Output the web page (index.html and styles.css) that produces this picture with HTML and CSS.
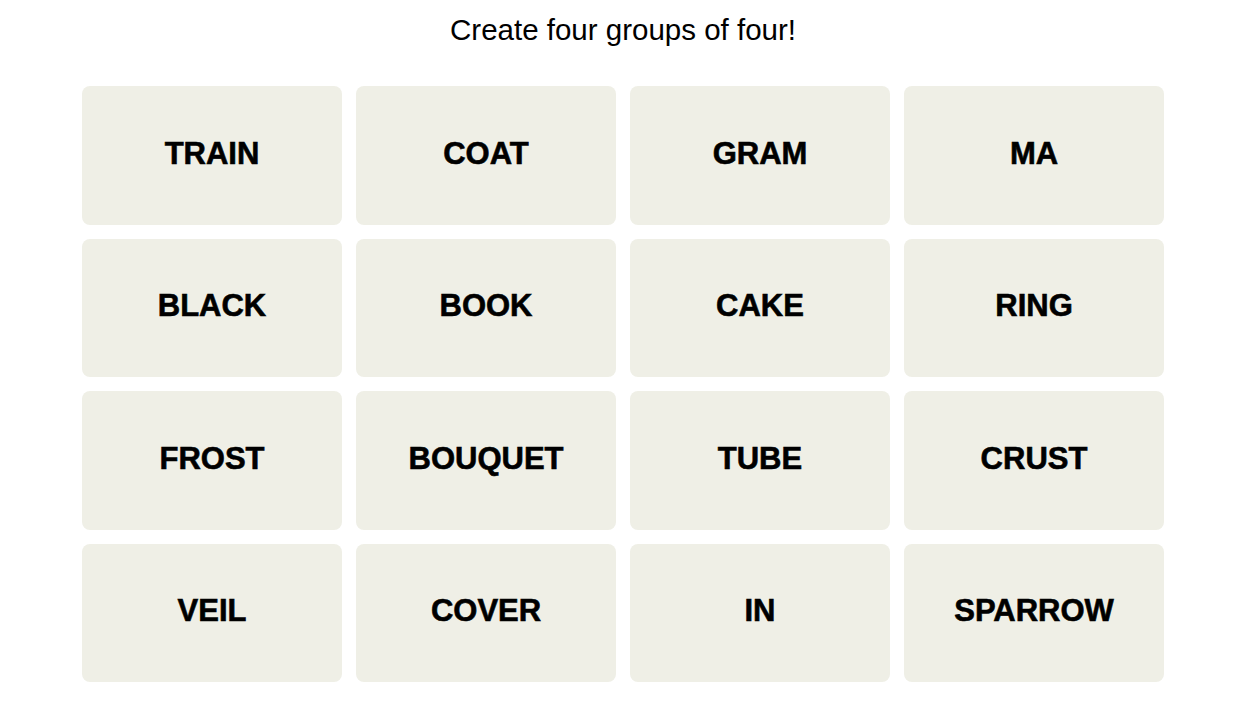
FILE: index.html
```html
<!DOCTYPE html>
<html>
<head>
  <title>Connections</title>
  <link rel="stylesheet" href="styles.css">
</head>
<body>
  <div class="game">
    <h2 class="prompt">Create four groups of four!</h2>
    <div class="board" id="board"></div>
  </div>
  <script>
    // Words in board order, left to right, top to bottom
    const words = [
      'TRAIN', 'COAT', 'GRAM', 'MA',
      'BLACK', 'BOOK', 'CAKE', 'RING',
      'FROST', 'BOUQUET', 'TUBE', 'CRUST',
      'VEIL', 'COVER', 'IN', 'SPARROW'
    ];

    const board = document.getElementById('board');
    words.forEach((word) => {
      const tile = document.createElement('button');
      tile.className = 'tile';
      tile.textContent = word;
      tile.addEventListener('click', () => {
        tile.classList.toggle('selected');
      });
      board.appendChild(tile);
    });
  </script>
</body>
</html>
```

FILE: styles.css
```css
body {
  font-family: "Liberation Sans", Arial, sans-serif;
  margin: 0;
  padding: 0;
  background-color: #fff;
  color: #000;
}
.game {
  width: 1082px;
  margin: 0 0 0 82px;
}
.prompt {
  font-size: 29.5px;
  font-weight: normal;
  text-align: center;
  margin: 0;
  padding-top: 12px;
  height: 86px;
  box-sizing: border-box;
  line-height: 36px;
}
.board {
  display: grid;
  grid-template-columns: repeat(4, 260px);
  grid-auto-rows: 138.5px;
  column-gap: 14px;
  row-gap: 14px;
}
.tile {
  background-color: #efefe6;
  border: none;
  border-radius: 8px;
  font-family: "Liberation Sans", Arial, sans-serif;
  font-size: 31px;
  font-weight: bold;
  -webkit-text-stroke: 0.6px #000;
  color: #000;
  padding: 0 0 3px 0;
  cursor: pointer;
}
.tile.selected {
  background-color: #5a594e;
  color: #fff;
}
```
